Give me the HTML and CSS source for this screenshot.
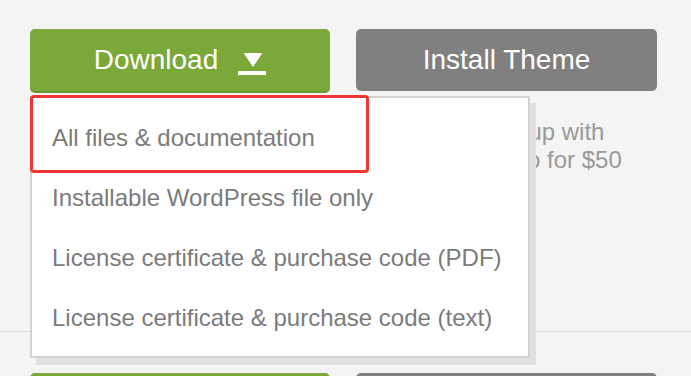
FILE: index.html
```html
<!DOCTYPE html>
<html lang="en">
<head>
    <meta charset="UTF-8">
    <meta name="viewport" content="width=device-width, initial-scale=1.0">
    <title>Download theme</title>
    <link rel="stylesheet" href="styles.css">
</head>
<body>
    <div class="section top">
        <div class="actions">
            <div class="download-wrap">
                <button type="button" class="btn btn-download">
                    <span>Download</span>
                    <svg class="dl-icon" width="28" height="22" viewBox="0 0 28 22">
                        <polygon points="5.5,0 24.5,0 15,14" fill="#fff"/>
                        <rect x="0" y="18" width="28" height="4" fill="#fff"/>
                    </svg>
                </button>
                <ul class="menu">
                    <li>All files &amp; documentation</li>
                    <li>Installable WordPress file only</li>
                    <li>License certificate &amp; purchase code (PDF)</li>
                    <li>License certificate &amp; purchase code (text)</li>
                </ul>
                <div class="highlight"></div>
            </div>
            <div class="install-col">
                <button type="button" class="btn btn-install">Install Theme</button>
                <p class="note">Have it fully set up with<br>by our expert pro for $50</p>
            </div>
        </div>
    </div>
    <div class="divider"></div>
    <div class="section bottom">
        <div class="actions">
            <button type="button" class="btn btn-download">
                <span>Download</span>
            </button>
            <button type="button" class="btn btn-install">Install Theme</button>
        </div>
    </div>
</body>
</html>
```

FILE: styles.css
```css
body {
    font-family: 'Liberation Sans', Arial, sans-serif;
    background-color: #f4f4f4;
    margin: 0;
    padding: 0;
    overflow: hidden;
    height: 100vh;
}

.section {
    padding: 29px 30px 0;
    box-sizing: border-box;
}

.top {
    height: 331px;
}

.bottom {
    padding-top: 41px;
}

.actions {
    display: grid;
    grid-template-columns: 300px 301px;
    gap: 26px;
    align-items: start;
}

.btn {
    display: flex;
    align-items: center;
    justify-content: center;
    gap: 20px;
    width: 100%;
    height: 62px;
    border: none;
    border-radius: 5px;
    color: #fff;
    font-family: 'Liberation Sans', Arial, sans-serif;
    font-size: 28px;
    cursor: pointer;
}

.btn-download {
    background-color: #7aa93a;
    box-shadow: 0 2px 0 #6a9631;
}

.btn-install {
    background-color: #808080;
}

.dl-icon {
    margin-top: 8px;
}

.download-wrap {
    position: relative;
}

.menu {
    position: absolute;
    top: 67px;
    left: 0;
    z-index: 2;
    width: 500px;
    box-sizing: border-box;
    margin: 0;
    padding: 10px 0 8px;
    list-style: none;
    background-color: #fff;
    border: 2px solid #d3d3d3;
    box-shadow: 6px 7px 0 #e0e0e0;
}

.menu li {
    height: 60px;
    line-height: 60px;
    padding-left: 20px;
    font-size: 24px;
    color: #7b7b7b;
    white-space: nowrap;
}

.highlight {
    position: absolute;
    top: 66px;
    left: 0;
    z-index: 3;
    width: 339px;
    height: 78px;
    box-sizing: border-box;
    border: 3px solid #ef3535;
    border-radius: 4px;
}

.note {
    margin: 27px 0 0;
    padding-left: 3px;
    font-size: 24px;
    line-height: 28px;
    color: #9a9a9a;
    white-space: nowrap;
}

.divider {
    height: 1px;
    background-color: #dcdcdc;
}
```
